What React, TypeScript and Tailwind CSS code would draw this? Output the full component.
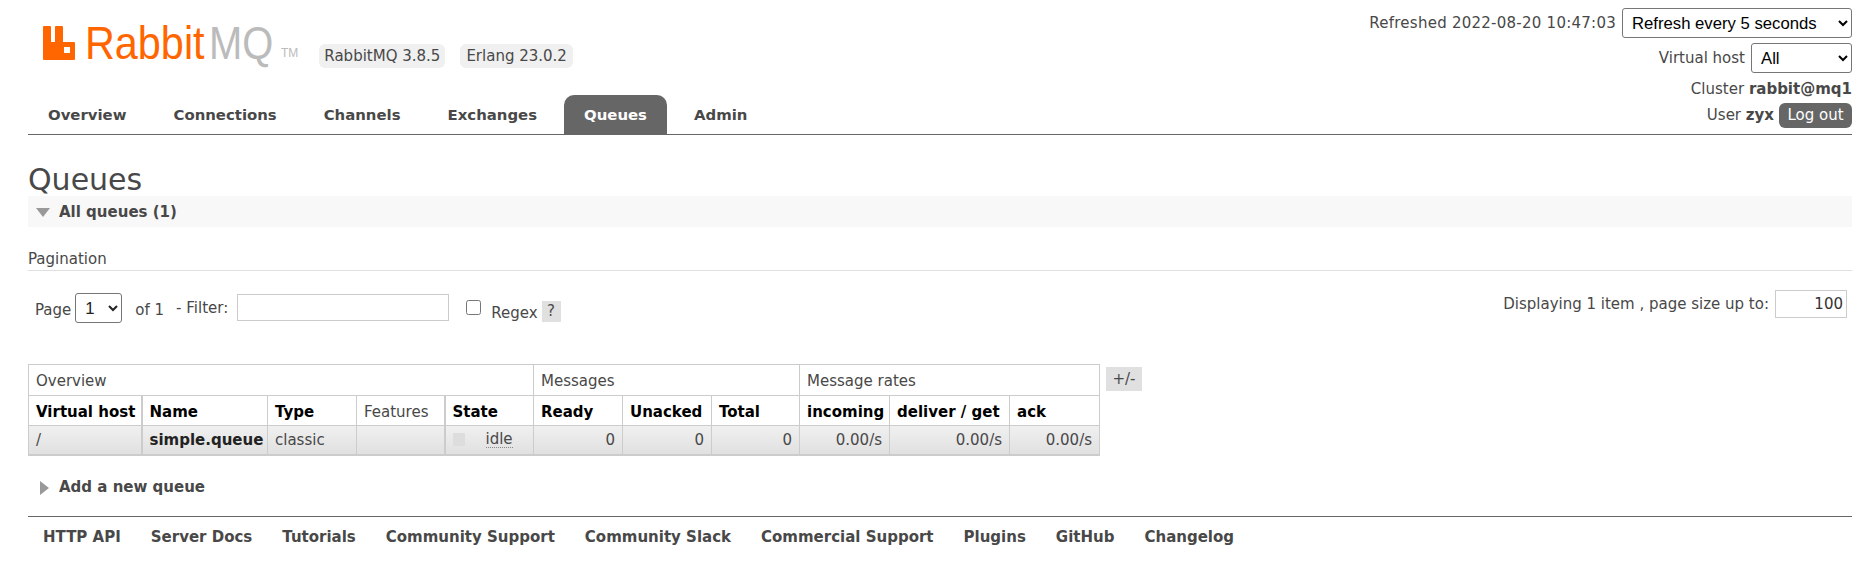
const navItems = ['Overview', 'Connections', 'Channels', 'Exchanges', 'Queues', 'Admin'];
const footerLinks = ['HTTP API', 'Server Docs', 'Tutorials', 'Community Support', 'Community Slack', 'Commercial Support', 'Plugins', 'GitHub', 'Changelog'];

const td = 'border border-[#ccc] border-b-2 px-[7px] align-middle';
const th = 'border border-[#ccc] px-[7px] pt-[3px] text-left align-middle whitespace-nowrap';

function Logo() {
  return (
    <div className="flex items-start h-[40px]">
      <svg width="32" height="34" viewBox="0 0 32 34" className="mt-[3px] shrink-0">
        <path fill="#f60" fillRule="evenodd" d="M1 0h6a1 1 0 0 1 1 1v15h4V1a1 1 0 0 1 1-1h6a1 1 0 0 1 1 1v15h11a1 1 0 0 1 1 1v16a1 1 0 0 1-1 1H1a1 1 0 0 1-1-1V1a1 1 0 0 1 1-1zM21 21v6h6v-6z" />
      </svg>
      <span className="ml-[10px] w-[118px] origin-left scale-x-[.88] font-['Liberation_Sans',sans-serif] text-[47px] leading-[40px] text-[#f60]">Rabbit</span>
      <span className="ml-[6px] w-[62px] origin-left scale-x-[.85] font-['Liberation_Sans',sans-serif] text-[47px] leading-[40px] text-[#bbb]">MQ</span>
      <span className="ml-[10px] mt-[22px] font-['Liberation_Sans',sans-serif] text-[12px] leading-[16px] text-[#bbb]">TM</span>
    </div>
  );
}

export default function App() {
  return (
    <div className="min-h-[570px] bg-white font-['DejaVu_Sans',sans-serif] text-[15px] text-[#484848] pl-[28px] pr-[20px] overflow-hidden">
      <header className="flex justify-between h-[135px] border-b border-[#666]">
        <div className="flex flex-col justify-between">
          <div className="flex items-start pt-[23px] pl-[15px]">
            <Logo />
            <span className="ml-[21px] mt-[21px] rounded-[6px] bg-[#f0f0f0] px-[5px] h-[24px] leading-[24px]">RabbitMQ 3.8.5</span>
            <span className="ml-[15px] mt-[21px] rounded-[6px] bg-[#f0f0f0] px-[6px] h-[24px] leading-[24px]">Erlang 23.0.2</span>
          </div>
          <nav className="flex text-[14.9px]">
            {navItems.map((item) => (
              <a
                key={item}
                className={
                  item === 'Queues'
                    ? 'h-[39px] leading-[40px] px-[20px] mr-[7px] font-bold rounded-t-[10px] bg-[#666] text-white'
                    : 'h-[39px] leading-[40px] px-[20px] mr-[7px] font-bold'
                }
              >
                {item}
              </a>
            ))}
          </nav>
        </div>
        <div className="flex flex-col items-end pt-[8px]">
          <div className="flex items-center gap-[6px]">
            <span className="tracking-[0.25px]">Refreshed 2022-08-20 10:47:03</span>
            <select className="w-[230px] h-[30px] border border-[#767676] rounded-[3px] bg-white pl-[5px] font-['Liberation_Sans',sans-serif] text-[16.7px] text-black">
              <option>Refresh every 5 seconds</option>
            </select>
          </div>
          <div className="flex items-center gap-[6px] mt-[5px]">
            <span>Virtual host</span>
            <select className="w-[101px] h-[30px] border border-[#767676] rounded-[3px] bg-white pl-[5px] font-['Liberation_Sans',sans-serif] text-[16.7px] text-black">
              <option>All</option>
            </select>
          </div>
          <div className="mt-[6px] leading-[20px]">
            Cluster <b>rabbit@mq1</b>
          </div>
          <div className="flex items-center gap-[5px] mt-[4px]">
            <span>
              User <b>zyx</b>
            </span>
            <button className="h-[25px] w-[73px] rounded-[6px] bg-[#666] text-white">Log out</button>
          </div>
        </div>
      </header>

      <h1 className="mt-[28px] text-[30px] leading-[33px] font-normal">Queues</h1>

      <div className="flex items-center h-[31px] pt-[1px] bg-[#f8f8f8] font-bold">
        <svg width="14" height="9" viewBox="0 0 14 9" className="ml-[8px] mr-[9px]">
          <path fill="#999" d="M0 0h14L7 9z" />
        </svg>
        All queues (1)
      </div>

      <div className="mt-[22px] h-[22px] leading-[20px] border-b border-[#e0e0e0]">Pagination</div>

      <div className="flex items-start justify-between h-[93px] pr-[5px]">
        <div className="flex items-start pl-[7px] pt-[22px]">
          <span className="mt-[6px]">Page</span>
          <select className="ml-[4px] w-[47px] h-[30px] border border-[#767676] rounded-[3px] bg-white pl-[5px] font-['Liberation_Sans',sans-serif] text-[16.7px] text-[#222]">
            <option>1</option>
          </select>
          <span className="ml-[13px] mt-[6px]">of 1</span>
          <span className="ml-[12px] mt-[4px]">- Filter:</span>
          <input className="ml-[9px] w-[212px] h-[27px] mt-[1px] border border-[#ccc]" />
          <input type="checkbox" className="ml-[17px] mt-[7px] w-[15px] h-[15px]" />
          <span className="ml-[10px] mt-[9px]">Regex</span>
          <span className="ml-[4px] mt-[8px] w-[19px] h-[21px] leading-[21px] text-center bg-[#e0e0e0]">?</span>
        </div>
        <div className="flex items-center pt-[19px] gap-[6px]">
          <span>Displaying 1 item , page size up to:</span>
          <input className="w-[72px] h-[28px] border border-[#ccc] text-right pr-[3px] text-[#333]" defaultValue="100" />
        </div>
      </div>

      <div className="flex items-start">
        <table className="border-collapse table-fixed w-[1071px]">
          <colgroup>
            <col className="w-[113px]" />
            <col className="w-[126px]" />
            <col className="w-[89px]" />
            <col className="w-[88px]" />
            <col className="w-[89px]" />
            <col className="w-[89px]" />
            <col className="w-[89px]" />
            <col className="w-[88px]" />
            <col className="w-[90px]" />
            <col className="w-[120px]" />
            <col className="w-[90px]" />
          </colgroup>
          <thead>
            <tr className="h-[31px]">
              <th colSpan={5} className={`${th} font-normal`}>Overview</th>
              <th colSpan={3} className={`${th} font-normal`}>Messages</th>
              <th colSpan={3} className={`${th} font-normal`}>Message rates</th>
            </tr>
            <tr className="h-[30px] text-black">
              <th className={`${th} border-r-2`}>Virtual host</th>
              <th className={th}>Name</th>
              <th className={th}>Type</th>
              <th className={`${th} border-r-2 font-normal text-[#484848]`}>Features</th>
              <th className={th}>State</th>
              <th className={th}>Ready</th>
              <th className={th}>Unacked</th>
              <th className={th}>Total</th>
              <th className={th}>incoming</th>
              <th className={th}>deliver / get</th>
              <th className={th}>ack</th>
            </tr>
          </thead>
          <tbody>
            <tr className="h-[29px] bg-gradient-to-b from-[#f0f0f0] to-[#e0e0e0]">
              <td className={`${td} border-r-2`}>/</td>
              <td className={`${td} pr-[0px] font-bold text-[#222]`}>simple.queue</td>
              <td className={td}>classic</td>
              <td className={`${td} border-r-2`}></td>
              <td className={td}>
                <div className="flex items-center">
                  <span className="w-[12px] h-[13px] bg-[#ddd]"></span>
                  <span className="ml-[21px] border-b border-dotted border-[#888] leading-[16px]">idle</span>
                </div>
              </td>
              <td className={`${td} text-right`}>0</td>
              <td className={`${td} text-right`}>0</td>
              <td className={`${td} text-right`}>0</td>
              <td className={`${td} text-right`}>0.00/s</td>
              <td className={`${td} text-right`}>0.00/s</td>
              <td className={`${td} text-right`}>0.00/s</td>
            </tr>
          </tbody>
        </table>
        <span className="ml-[6px] mt-[3px] w-[36px] h-[24px] leading-[24px] text-center bg-[#e0e0e0]">+/-</span>
      </div>

      <div className="flex items-center mt-[21px] h-[22px] font-bold">
        <svg width="9" height="14" viewBox="0 0 9 14" className="ml-[12px] mr-[10px]">
          <path fill="#999" d="M0 0l9 7-9 7z" />
        </svg>
        Add a new queue
      </div>

      <footer className="flex items-center gap-[30px] mt-[17px] pl-[15px] h-[43px] border-t border-[#666] font-bold">
        {footerLinks.map((link) => (
          <a key={link}>{link}</a>
        ))}
      </footer>
    </div>
  );
}
